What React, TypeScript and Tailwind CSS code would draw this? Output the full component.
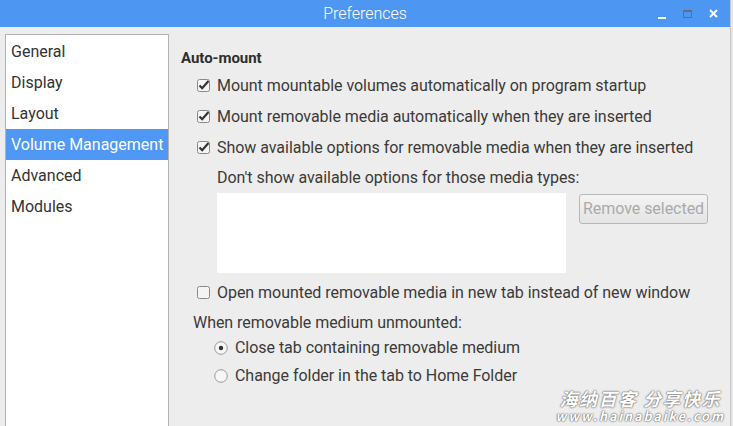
import React from "react";

const font = { fontFamily: "Roboto, 'Noto Sans', sans-serif" };

const pages = ["General", "Display", "Layout", "Volume Management", "Advanced", "Modules"];

function Check({ on }: { on: boolean }) {
  return (
    <svg width="13" height="13" viewBox="0 0 13 13" className="shrink-0">
      <rect x="0.5" y="0.5" width="12" height="12" rx="2" fill="#f4f4f4" stroke="#8a8a8a" />
      {on && <path d="M2.5 6.5 L5.2 9.2 L11.5 2" fill="none" stroke="#333" strokeWidth="2.2" />}
    </svg>
  );
}

function Radio({ on }: { on: boolean }) {
  return (
    <svg width="14" height="14" viewBox="0 0 14 14" className="shrink-0">
      <circle cx="7" cy="7" r="6.3" fill="#f6f6f6" stroke="#9a9a9a" />
      {on && <circle cx="7" cy="7" r="2.2" fill="#333" />}
    </svg>
  );
}

export default function App() {
  return (
    <div className="relative h-[426px] w-[733px] overflow-hidden bg-[#e6e6e6]" style={font}>
      <div className="flex h-full w-[731px] flex-col border-r border-[#c8c8c8] bg-[#ededed]">
        {/* title bar */}
        <div className="relative flex h-[27px] shrink-0 items-center justify-center bg-[#4d97f3]">
          <span className="text-[16px] font-light text-white">Preferences</span>
          <div className="absolute right-[12px] top-0 flex h-full items-center gap-[17px]">
            <div className="mt-[8px] h-[2px] w-[8px] bg-white" />
            <div className="h-[8px] w-[9px] border border-t-2 border-[#6b6b6b]" />
            <svg width="9" height="9" viewBox="0 0 9 9">
              <path d="M1 1 L8 8 M8 1 L1 8" stroke="white" strokeWidth="2" />
            </svg>
          </div>
        </div>

        <div className="flex min-h-0 flex-1 pt-[7px]">
          {/* page list */}
          <div className="ml-[5px] w-[164px] shrink-0 border border-b-0 border-[#b2b2b2] bg-white pt-[1px]">
            {pages.map((p) => (
              <div
                key={p}
                className={
                  "flex h-[31px] items-center pl-[5px] text-[16px] " +
                  (p === "Volume Management" ? "bg-[#4f98f5] text-white" : "text-[#333]")
                }
              >
                {p}
              </div>
            ))}
          </div>

          {/* settings */}
          <div className="flex flex-1 flex-col pl-[12px] pt-[12px] text-[16px] tracking-[-0.04px] text-[#3a3a3a]">
            <div className="h-[24px] text-[15px] font-bold leading-[24px] text-[#2e2e2e]">Auto-mount</div>
            <div className="flex flex-col pl-[16px]">
              <label className="flex h-[31px] items-center gap-[7px]">
                <Check on />
                <span>Mount mountable volumes automatically on program startup</span>
              </label>
              <label className="flex h-[31px] items-center gap-[7px]">
                <Check on />
                <span>Mount removable media automatically when they are inserted</span>
              </label>
              <label className="flex h-[31px] items-center gap-[7px]">
                <Check on />
                <span>Show available options for removable media when they are inserted</span>
              </label>
            </div>
            <div className="flex h-[30px] items-center pl-[36px]">Don't show available options for those media types:</div>
            <div className="flex items-start pl-[36px]">
              <div className="h-[80px] w-[349px] bg-white" />
              <button className="ml-[13px] mt-[1px] h-[30px] w-[129px] rounded-[3px] border border-[#b8b8b8] bg-gradient-to-b from-[#f4f4f4] to-[#e4e4e4] text-[16px] text-[#aaa]">
                Remove selected
              </button>
            </div>
            <label className="mt-[4px] flex h-[31px] items-center gap-[7px] pl-[16px]">
              <Check on={false} />
              <span>Open mounted removable media in new tab instead of new window</span>
            </label>
            <div className="flex h-[30px] items-center pl-[12px]">When removable medium unmounted:</div>
            <div className="flex flex-col gap-[8px] pl-[33px]">
              <label className="flex h-[20px] items-center gap-[7px]">
                <Radio on />
                <span>Close tab containing removable medium</span>
              </label>
              <label className="flex h-[20px] items-center gap-[7px]">
                <Radio on={false} />
                <span>Change folder in the tab to Home Folder</span>
              </label>
            </div>
          </div>
        </div>
      </div>

      {/* watermark */}
      <div
        className="absolute bottom-[4px] right-[8px] flex flex-col items-center italic text-white"
        style={{ textShadow: "0 0 2px #555, 0 0 1px #555", fontFamily: "'Noto Sans CJK SC', 'Liberation Sans', sans-serif" }}
      >
        <span className="text-[18px] font-bold leading-[22px] tracking-[1.5px]">海纳百客 分享快乐</span>
        <span className="text-[12.5px] font-bold leading-[13px] tracking-[2px]">www.hainabaike.com</span>
      </div>
    </div>
  );
}
